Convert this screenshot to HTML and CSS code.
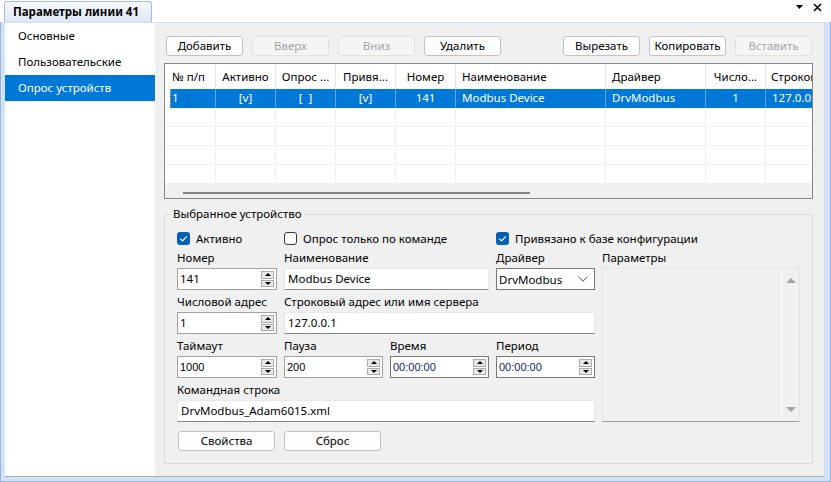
FILE: index.html
```html
<!DOCTYPE html>
<html lang="ru">
<head>
<meta charset="utf-8">
<title>Параметры линии 41</title>
<link rel="stylesheet" href="styles.css">
</head>
<body>
<div class="tabbar">
  <div class="tab">Параметры линии 41</div>
  <div class="winctl">
    <svg class="ic-drop" width="7" height="4" viewBox="0 0 7 4"><path d="M0 0h7L3.5 4z" fill="#000"/></svg>
    <svg class="ic-close" width="9" height="9" viewBox="0 0 9 9"><path d="M1 1l7 7M8 1L1 8" stroke="#000" stroke-width="1.6" fill="none"/></svg>
  </div>
</div>
<div class="frame">
  <div class="content">
    <div class="sidebar">
      <div class="nav-item">Основные</div>
      <div class="nav-item">Пользовательские</div>
      <div class="nav-item active">Опрос устройств</div>
    </div>
    <div class="main">
      <div class="toolbar">
        <div class="btn">Добавить</div>
        <div class="btn dis">Вверх</div>
        <div class="btn dis">Вниз</div>
        <div class="btn">Удалить</div>
        <div class="spacer"></div>
        <div class="btn">Вырезать</div>
        <div class="btn">Копировать</div>
        <div class="btn dis">Вставить</div>
      </div>
      <div class="table">
        <div class="grid">
          <div class="h first">№ п/п</div>
          <div class="h c">Активно</div>
          <div class="h c">Опрос ...</div>
          <div class="h c">Привя...</div>
          <div class="h c">Номер</div>
          <div class="h">Наименование</div>
          <div class="h">Драйвер</div>
          <div class="h c">Число...</div>
          <div class="h last">Строковый адрес</div>

          <div class="row sel">
            <div class="d lead"></div>
            <div class="d num">1</div>
            <div class="d c">[v]</div>
            <div class="d c">[&nbsp;&nbsp;]</div>
            <div class="d c">[v]</div>
            <div class="d c">141</div>
            <div class="d">Modbus Device</div>
            <div class="d">DrvModbus</div>
            <div class="d c">1</div>
            <div class="d last">127.0.0.1</div>
          </div>
          <div class="row">
            <div class="d lead"></div><div class="d"></div><div class="d"></div><div class="d"></div><div class="d"></div><div class="d"></div><div class="d"></div><div class="d"></div><div class="d"></div><div class="d last"></div>
          </div>
          <div class="row">
            <div class="d lead"></div><div class="d"></div><div class="d"></div><div class="d"></div><div class="d"></div><div class="d"></div><div class="d"></div><div class="d"></div><div class="d"></div><div class="d last"></div>
          </div>
          <div class="row">
            <div class="d lead"></div><div class="d"></div><div class="d"></div><div class="d"></div><div class="d"></div><div class="d"></div><div class="d"></div><div class="d"></div><div class="d"></div><div class="d last"></div>
          </div>
          <div class="row">
            <div class="d lead"></div><div class="d"></div><div class="d"></div><div class="d"></div><div class="d"></div><div class="d"></div><div class="d"></div><div class="d"></div><div class="d"></div><div class="d last"></div>
          </div>
        </div>
        <div class="hscroll"><div class="thumb"></div></div>
      </div>

      <fieldset class="group">
        <legend>Выбранное устройство</legend>
        <div class="form">
          <div class="chk c1"><span class="box on"><svg width="13" height="13" viewBox="0 0 13 13"><path d="M3.2 6.6l2.3 2.3 4.3-4.6" stroke="#fff" stroke-width="1.2" fill="none"/></svg></span>Активно</div>
          <div class="chk c2"><span class="box"></span>Опрос только по команде</div>
          <div class="chk c4"><span class="box on"><svg width="13" height="13" viewBox="0 0 13 13"><path d="M3.2 6.6l2.3 2.3 4.3-4.6" stroke="#fff" stroke-width="1.2" fill="none"/></svg></span>Привязано к базе конфигурации</div>

          <div class="lbl">Номер</div>
          <div class="lbl">Наименование</div>
          <div class="lbl c4">Драйвер</div>
          <div class="lbl">Параметры</div>

          <div class="spin"><span class="val">141</span><span class="arrows"><span class="arr up"></span><span class="arr down"></span></span></div>
          <div class="text s2">Modbus Device</div>
          <div class="select">DrvModbus<svg width="10" height="6" viewBox="0 0 10 6"><path d="M0.5 0.8l4.5 4.4 4.5-4.4" stroke="#555" stroke-width="1" fill="none"/></svg></div>
          <div class="params"><div class="vscroll"><span class="tri-up"></span><span class="tri-down"></span></div></div>

          <div class="lbl gap">Числовой адрес</div>
          <div class="lbl gap s3">Строковый адрес или имя сервера</div>

          <div class="spin"><span class="val">1</span><span class="arrows"><span class="arr up"></span><span class="arr down"></span></span></div>
          <div class="text s3">127.0.0.1</div>

          <div class="lbl gap">Таймаут</div>
          <div class="lbl gap">Пауза</div>
          <div class="lbl gap">Время</div>
          <div class="lbl gap">Период</div>

          <div class="spin"><span class="val small">1000</span><span class="arrows"><span class="arr up"></span><span class="arr down"></span></span></div>
          <div class="spin"><span class="val small">200</span><span class="arrows"><span class="arr up"></span><span class="arr down"></span></span></div>
          <div class="spin time"><span class="val small">00:00:00</span><span class="arrows"><span class="arr up"></span><span class="arr down"></span></span></div>
          <div class="spin time"><span class="val small">00:00:00</span><span class="arrows"><span class="arr up"></span><span class="arr down"></span></span></div>

          <div class="lbl gap s4">Командная строка</div>
          <div class="text s4">DrvModbus_Adam6015.xml</div>

          <div class="btn fbtn b1">Свойства</div>
          <div class="btn fbtn">Сброс</div>
        </div>
      </fieldset>
    </div>
  </div>
</div>
</body>
</html>
```
FILE: styles.css
```css
* { box-sizing: border-box; }
html, body { margin: 0; padding: 0; }
body {
  width: 831px;
  height: 482px;
  overflow: hidden;
  background: #fff;
  font-family: "Noto Sans", "Open Sans", sans-serif;
  font-size: 11.5px;
  color: #000;
}

/* top tab strip */
.tabbar {
  height: 22px;
  display: flex;
  align-items: flex-end;
  padding-left: 4px;
}
.tab {
  height: 21px;
  padding: 0 12px 0 8px;
  border: 1px solid #a3bbe0;
  border-bottom: none;
  border-radius: 3px 3px 0 0;
  background: linear-gradient(#f8fbff, #dbe6f6);
  font-weight: 700;
  line-height: 19px;
  white-space: nowrap;
}
.winctl {
  margin-left: auto;
  align-self: flex-start;
  display: flex;
  align-items: flex-start;
  gap: 10px;
  padding-right: 9px;
}
.ic-drop { margin-top: 5px; }
.ic-close { margin-top: 3px; }

/* frame */
.frame {
  height: 460px;
  border: 1px solid #97b3dd;
  border-top: none;
  padding: 1px 6px 4px 4px;
  background: #d3e1f4;
  display: flex;
}
.content {
  flex: 1;
  display: flex;
  border-bottom: 1px solid #a9adb5;
}

.sidebar {
  width: 150px;
  background: #fff;
}
.nav-item {
  height: 26px;
  line-height: 26px;
  padding-left: 13px;
  white-space: nowrap;
}
.nav-item.active {
  background: #0078d7;
  color: #fff;
}

.main {
  flex: 1;
  background: #f0f0f0;
  padding: 13px 11px 0 9px;
  display: flex;
  flex-direction: column;
}

/* buttons */
.toolbar {
  display: flex;
  gap: 9px;
  margin: 0 1px 0 2px;
  height: 20px;
}
.spacer { flex: 1; }
.btn {
  width: 77px;
  height: 20px;
  border: 1px solid #c3c3c3;
  border-radius: 3px;
  background: #fdfdfd;
  text-align: center;
  line-height: 18px;
  white-space: nowrap;
}
.btn.dis {
  color: #a5a5a5;
  border-color: #e2e2e2;
  background: #f5f5f5;
}

/* table */
.table {
  margin-top: 7px;
  border: 1px solid #828790;
  background: #fff;
}
.grid {
  display: grid;
  grid-template-columns: 5px 46px 60px 60px 60px 60px 150px 100px 60px 46px;
  grid-template-rows: 25px repeat(5, 19px);
}
.row { display: contents; }
.h {
  border-right: 1px solid #e5e5e5;
  line-height: 25px;
  white-space: nowrap;
  overflow: hidden;
  padding: 0 6px;
}
.h.c { text-align: center; padding: 0 2px; }
.h.first { grid-column: span 2; padding-left: 7px; }
.h.last { border-right: none; padding-left: 5px; }
.d {
  border-right: 1px solid #efefef;
  border-bottom: 1px solid #efefef;
  line-height: 18px;
  white-space: nowrap;
  overflow: hidden;
  padding: 0 6px;
}
.d.c { text-align: center; padding: 0 2px; }
.d.lead { padding: 0; border-right: none; }
.d.last { border-right: none; }
.row.sel .d {
  background: #0078d7;
  color: #fff;
  border-right-color: #5ea6e4;
  border-bottom-color: #0078d7;
}
.row.sel .d.lead { background: #fff; border-bottom-color: #efefef; }
.row.sel .d.num { padding-left: 1px; border-left: 1px dotted #f2a33a; }
.hscroll {
  height: 14px;
  background: #f0f0f0;
  padding: 8px 0 0 18px;
}
.thumb {
  width: 347px;
  height: 2px;
  background: #858585;
}

/* group box */
.group {
  margin: 7px 0 0 0;
  border: 1px solid #dcdcdc;
  padding: 6px 12px 12px 12px;
  min-width: 0;
}
.group legend {
  margin-left: -6px;
  padding: 0 2px;
  line-height: 16px;
}
.form {
  display: grid;
  grid-template-columns: 100px 99px 99px 99px 198px;
  grid-template-rows: 20px 20px 22px 22px 22px 22px 22px 22px 22px 29px;
  column-gap: 7px;
}
.c1 { grid-column: 1; }
.c2 { grid-column: 2 / span 2; }
.c4 { grid-column: 4 / span 1; }
.chk.c4 { grid-column: 4 / span 2; }
.s2 { grid-column: span 2; }
.s3 { grid-column: span 3; }
.s4 { grid-column: 1 / span 4; }

.chk {
  display: flex;
  align-items: center;
  gap: 6px;
  white-space: nowrap;
}
.box {
  width: 13px;
  height: 13px;
  border: 1px solid #3a3a3a;
  border-radius: 3px;
  background: #fff;
  flex: none;
}
.box.on {
  border: none;
  background: #005fb8;
}
.box svg { display: block; }

.lbl {
  line-height: 20px;
  white-space: nowrap;
}
.lbl.gap { padding-top: 2px; }

.spin {
  display: flex;
  height: 22px;
  border: 1px solid #a2a2a2;
  background: #fff;
}
.spin.time { border-color: #7a7a7a; }
.val {
  flex: 1;
  padding-left: 2px;
  line-height: 20px;
  white-space: nowrap;
}
.val.small {
  font-family: "Liberation Sans", Arial, sans-serif;
  font-size: 11px;
}
.spin.time .val { color: #112266; }
.arrows {
  width: 16px;
  display: flex;
  flex-direction: column;
  gap: 1px;
  padding: 2px 2px 2px 1px;
}
.arr {
  flex: 1;
  border: 1px solid #acacac;
  background: #e8e8e8;
  display: flex;
  align-items: center;
  justify-content: center;
}
.arr.up::after {
  content: "";
  border-left: 3.5px solid transparent;
  border-right: 3.5px solid transparent;
  border-bottom: 3.5px solid #000;
}
.arr.down::after {
  content: "";
  border-left: 3.5px solid transparent;
  border-right: 3.5px solid transparent;
  border-top: 3.5px solid #000;
}

.text {
  height: 22px;
  background: #fff;
  border: 1px solid #e8e8e8;
  border-bottom-color: #868686;
  padding-left: 3px;
  line-height: 20px;
  white-space: nowrap;
  overflow: hidden;
}
.select {
  height: 22px;
  background: #fff;
  border: 1px solid #7a7a7a;
  display: flex;
  align-items: center;
  justify-content: space-between;
  padding: 0 6px 0 2px;
}
.params {
  grid-column: 5;
  grid-row: 3 / 10;
  border: 1px solid #e3e3e3;
  border-bottom-color: #a0a0a0;
  background: #f0f0f0;
  display: flex;
  justify-content: flex-end;
}
.vscroll {
  width: 18px;
  border-left: 1px solid #fafafa;
  display: flex;
  flex-direction: column;
  justify-content: space-between;
  align-items: center;
  padding: 9px 0 9px;
}
.tri-up {
  border-left: 5px solid transparent;
  border-right: 5px solid transparent;
  border-bottom: 5px solid #a3a3a3;
}
.tri-down {
  border-left: 5px solid transparent;
  border-right: 5px solid transparent;
  border-top: 5px solid #a3a3a3;
}
.fbtn {
  width: 97px;
  align-self: end;
}
.b1 { grid-column: 1; margin-left: 1px; }
```
